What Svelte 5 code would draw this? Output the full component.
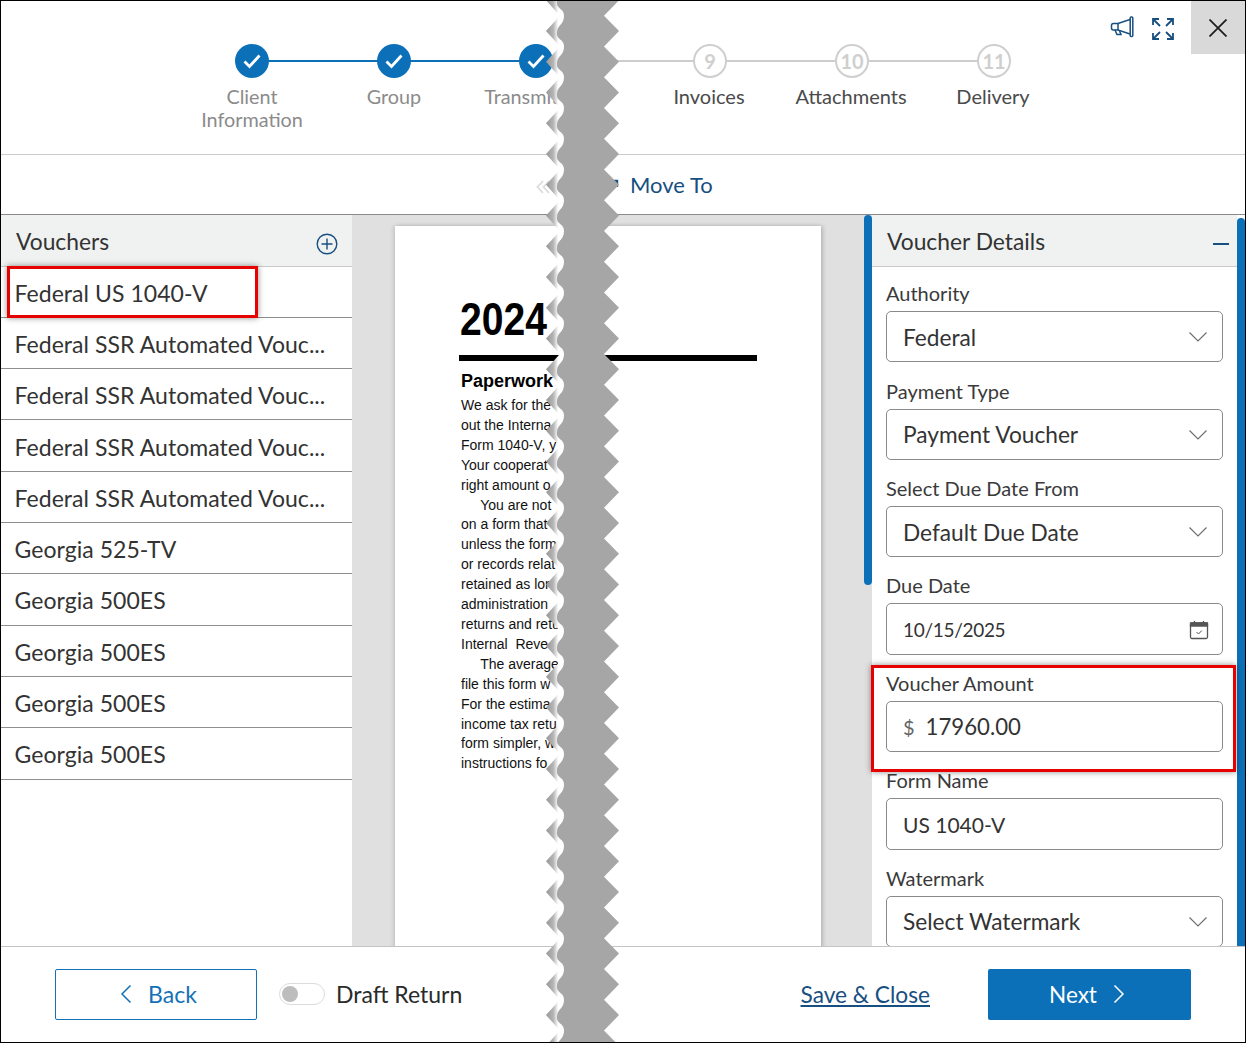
<script>
  const doneSteps = ['Client Information', 'Group', 'Transmittals'];
  const nextSteps = [
    { num: 9, label: 'Invoices' },
    { num: 10, label: 'Attachments' },
    { num: 11, label: 'Delivery' },
  ];

  const vouchers = [
    'Federal US 1040-V',
    'Federal SSR Automated Vouc...',
    'Federal SSR Automated Vouc...',
    'Federal SSR Automated Vouc...',
    'Federal SSR Automated Vouc...',
    'Georgia 525-TV',
    'Georgia 500ES',
    'Georgia 500ES',
    'Georgia 500ES',
    'Georgia 500ES',
  ];

  const fields = [
    { label: 'Authority', value: 'Federal', kind: 'select' },
    { label: 'Payment Type', value: 'Payment Voucher', kind: 'select' },
    { label: 'Select Due Date From', value: 'Default Due Date', kind: 'select' },
    { label: 'Due Date', value: '10/15/2025', kind: 'date' },
    { label: 'Voucher Amount', value: '17960.00', kind: 'money' },
    { label: 'Form Name', value: 'US 1040-V', kind: 'text' },
    { label: 'Watermark', value: 'Select Watermark', kind: 'select' },
  ];

  // only what shows left of the tear
  const noticeLines = [
    'We ask for the',
    'out the Interna',
    'Form 1040-V, y',
    'Your cooperat',
    'right amount o',
    '     You are not',
    'on a form that',
    'unless the form',
    'or records relat',
    'retained as lon',
    'administration',
    'returns and retu',
    'Internal  Reve',
    '     The average',
    'file this form w',
    'For the estima',
    'income tax retu',
    'form simpler, w',
    'instructions fo',
  ];

  // torn paper strip that hides the middle of the shot
  const PERIOD = 30.75;
  const HEIGHT = 1043;
  const count = Math.ceil(HEIGHT / PERIOD) + 1;
  const tips = Array.from({ length: count }, (_, i) => 0.3 + i * PERIOD);

  let tornRight = '';
  let tornLeft = '';
  tips.forEach((y) => {
    tornRight += ` L74 ${y} L59 ${y + PERIOD / 2}`;
  });
  [...tips].reverse().forEach((y) => {
    const p = PERIOD;
    tornLeft += ` L19 ${y + p / 2} C19 ${y + p * 0.25} 11 ${y + p * 0.3} 12 ${y + p * 0.05} C12 ${y - p * 0.2} 19 ${y - p * 0.2} 19 ${y - p / 2}`;
  });
  const tornBody = `M12 0${tornRight} L59 ${HEIGHT} L12 ${HEIGHT}${tornLeft} Z`;
  const tornTeeth = tips
    .map((y) => `M1 ${y} L14 ${y - PERIOD / 2 + 1} L19 ${y - PERIOD / 2 + 1} L19 ${y + PERIOD / 2 - 1} L14 ${y + PERIOD / 2 - 1} Z`)
    .join(' ');
</script>

<div class="window">
  <header class="top">
    <div class="stepper">
      {#each doneSteps as step, i}
        <div class="step done" class:first={i === 0}>
          <span class="dot">
            <svg width="18" height="18" viewBox="0 0 18 18"><path d="M1.5 9.5 L6.5 14.5 L16.5 3.5" fill="none" stroke="#fff" stroke-width="2.8" /></svg>
          </span>
          <span class="step-label">{step}</span>
        </div>
      {/each}
      <div class="step-gap"></div>
      {#each nextSteps as step, i}
        <div class="step todo" class:last={i === nextSteps.length - 1}>
          <span class="dot">{step.num}</span>
          <span class="step-label">{step.label}</span>
        </div>
      {/each}
    </div>
    <div class="actions">
      <button class="icon-btn megaphone" aria-label="Announcements">
        <svg width="24" height="22" viewBox="0 0 24 22" fill="none" stroke="#174f80" stroke-width="1.5">
          <rect x="20.2" y="1" width="2.6" height="19.5" rx="1" />
          <path d="M20 3.5 L8 7.5 H3.5 Q1.5 7.5 1.5 9.5 V12 Q1.5 14 3.5 14 H8 L20 18" />
          <path d="M8 7.5 V14" />
          <path d="M5 14 L7 18.5 H11 L9.5 15" />
        </svg>
      </button>
      <button class="icon-btn expand" aria-label="Expand">
        <svg width="24" height="24" viewBox="0 0 24 24" fill="none" stroke="#174f80" stroke-width="1.8">
          <path d="M2 8 V2 H8 M2 2 L9 9" />
          <path d="M16 2 H22 V8 M22 2 L15 9" />
          <path d="M2 16 V22 H8 M2 22 L9 15" />
          <path d="M16 22 H22 V16 M22 22 L15 15" />
        </svg>
      </button>
      <button class="close" aria-label="Close">
        <svg width="18" height="18" viewBox="0 0 18 18"><path d="M0.5 0.5 L17.5 17.5 M17.5 0.5 L0.5 17.5" stroke="#1c1c1c" stroke-width="1.7" /></svg>
      </button>
    </div>
  </header>

  <div class="toolbar">
    <svg class="rewind" width="14" height="14" viewBox="0 0 14 14" fill="none" stroke="#dcdcdc" stroke-width="1.8">
      <path d="M7 1 L1.5 7 L7 13 M13 1 L7.5 7 L13 13" />
    </svg>
    <svg class="move-icon" width="20" height="20" viewBox="0 0 20 20" fill="none" stroke="#174f80" stroke-width="2.4">
      <path d="M5 17 L15 7 M10 5 H16 V11" />
    </svg>
    <span class="move-label">Move To</span>
  </div>

  <main class="body">
    <aside class="vouchers">
      <div class="panel-head">
        <span>Vouchers</span>
        <svg class="plus" width="22" height="22" viewBox="0 0 22 22" fill="none" stroke="#174f80" stroke-width="1.4">
          <circle cx="11" cy="11" r="9.8" />
          <path d="M11 5.5 V16.5 M5.5 11 H16.5" />
        </svg>
      </div>
      {#each vouchers as voucher}
        <div class="voucher">{voucher}</div>
      {/each}
    </aside>

    <section class="preview">
      <div class="page">
        <div class="year">2024</div>
        <div class="rule"></div>
        <div class="notice">
          <div class="notice-title">Paperwork</div>
          {#each noticeLines as line}
            <div class="notice-line">{line}</div>
          {/each}
        </div>
      </div>
      <div class="thumb"></div>
    </section>

    <section class="details">
      <div class="panel-head">
        <span>Voucher Details</span>
        <span class="minus"></span>
      </div>
      <div class="fields">
        {#each fields as field}
          <div class="field">
            <div class="field-label">{field.label}</div>
            <div class="control {field.kind}">
              {#if field.kind === 'money'}<span class="currency">$</span>{/if}
              <span class="value">{field.value}</span>
              {#if field.kind === 'select'}
                <svg class="caret" width="18" height="10" viewBox="0 0 18 10" fill="none" stroke="#6f6f6f" stroke-width="1.2"><path d="M0.5 0.5 L9 9 L17.5 0.5" /></svg>
              {:else if field.kind === 'date'}
                <svg class="cal" width="20" height="20" viewBox="0 0 20 20" fill="none" stroke="#555" stroke-width="1.3">
                  <rect x="1.5" y="3" width="17" height="15.5" rx="1.5" />
                  <path d="M1.5 3 H18.5 V6 H1.5 Z" fill="#555" />
                  <path d="M5.5 1 V3 M14.5 1 V3" />
                  <path d="M7.5 12 L9.5 14 L12.8 10.5" stroke-width="1" />
                </svg>
              {/if}
            </div>
          </div>
        {/each}
      </div>
    </section>

    <div class="rail"></div>
  </main>

  <footer class="bottom">
    <button class="back">
      <svg width="12" height="20" viewBox="0 0 12 20" fill="none" stroke="#1371b8" stroke-width="1.5"><path d="M10.5 1.5 L2 10 L10.5 18.5" /></svg>
      Back
    </button>
    <span class="toggle"><span class="knob"></span></span>
    <span class="draft">Draft Return</span>
    <span class="save">Save &amp; Close</span>
    <button class="next">
      Next
      <svg width="12" height="20" viewBox="0 0 12 20" fill="none" stroke="#fff" stroke-width="1.5"><path d="M1.5 1.5 L10 10 L1.5 18.5" /></svg>
    </button>
  </footer>

  <div class="callout callout-voucher"></div>
  <div class="callout callout-amount"></div>

  <svg class="torn" width="76" height="1043" viewBox="0 0 76 1043" aria-hidden="true">
    <defs>
      <linearGradient id="tooth" x1="0" x2="1" y1="0" y2="0">
        <stop offset="0" stop-color="#979797" />
        <stop offset="0.4" stop-color="#b4b4b4" />
        <stop offset="0.68" stop-color="#ffffff" />
        <stop offset="1" stop-color="#ffffff" />
      </linearGradient>
    </defs>
    <path d={tornTeeth} fill="url(#tooth)" />
    <path d={tornBody} fill="#a6a6a6" />
  </svg>
</div>

<style>
  :global(body) {
    margin: 0;
    background: #fff;
  }

  .window {
    position: relative;
    box-sizing: border-box;
    width: 1246px;
    height: 1043px;
    border: 1px solid #000;
    background: #fff;
    overflow: hidden;
    font-family: Lato, "Open Sans", sans-serif;
    color: #333;
    display: flex;
    flex-direction: column;
  }

  button {
    font-family: inherit;
    cursor: pointer;
    background: none;
    border: 0;
    padding: 0;
  }

  /* stepper */
  .top {
    box-sizing: border-box;
    height: 154px;
    flex: none;
    display: flex;
    border-bottom: 1px solid #ccc;
  }

  .stepper {
    display: flex;
    padding: 43px 0 0 180px;
  }

  .step {
    position: relative;
    width: 142px;
    display: flex;
    flex-direction: column;
    align-items: center;
    text-align: center;
  }

  .step::before {
    content: '';
    position: absolute;
    top: 16px;
    left: 0;
    right: 0;
    height: 2px;
    background: #0b70b8;
  }

  .step.first::before {
    left: 50%;
  }

  .step.todo::before {
    background: #cdcdcd;
  }

  .step.last::before {
    right: 50%;
  }

  .step-gap {
    width: 32px;
    height: 2px;
    margin-top: 16px;
    background: #cdcdcd;
  }

  .dot {
    position: relative;
    box-sizing: border-box;
    width: 34px;
    height: 34px;
    border-radius: 50%;
    display: flex;
    align-items: center;
    justify-content: center;
    background: #0b70b8;
  }

  .todo .dot {
    background: #fff;
    border: 2px solid #cfcfcf;
    color: #cfcfcf;
    font-size: 20px;
    font-weight: 700;
  }

  .step-label {
    width: 120px;
    margin-top: 7px;
    font-size: 19.8px;
    line-height: 23px;
    color: #8b8b8b;
  }

  .todo .step-label {
    color: #4a4a4a;
    width: 142px;
    padding-right: 2px;
    box-sizing: border-box;
    font-size: 20px;
  }

  .actions {
    margin-left: auto;
    display: flex;
    align-items: flex-start;
  }

  .icon-btn {
    display: block;
    margin-top: 16px;
  }

  .megaphone {
    margin-top: 15px;
    margin-right: 17px;
  }

  .expand {
    margin-right: 16px;
  }

  .close {
    width: 54px;
    height: 53px;
    background: #d9d9d9;
    display: flex;
    align-items: center;
    justify-content: center;
  }

  /* move-to row */
  .toolbar {
    box-sizing: border-box;
    height: 60px;
    flex: none;
    display: flex;
    align-items: center;
    padding-left: 535px;
    border-bottom: 1px solid #8a8a8a;
  }

  .rewind {
    margin-right: 51px;
    margin-top: 4px;
  }

  .move-icon {
    margin-top: 2px;
    flex: none;
  }

  .move-label {
    margin-left: 9px;
    font-size: 22px;
    color: #174f80;
  }

  /* three columns */
  .body {
    flex: 1;
    min-height: 0;
    display: flex;
  }

  .vouchers {
    width: 351px;
    flex: none;
  }

  .panel-head {
    box-sizing: border-box;
    height: 52px;
    display: flex;
    align-items: center;
    justify-content: space-between;
    padding: 0 15px;
    background: #f0f2f2;
    border-bottom: 1px solid #c9c9c9;
    font-size: 22.8px;
    color: #333;
  }

  .plus {
    margin-top: 6px;
    margin-right: -1px;
  }

  .voucher {
    box-sizing: border-box;
    height: 51.33px;
    padding: 2px 0 0 13.5px;
    display: flex;
    align-items: center;
    border-bottom: 1px solid #8f8f8f;
    font-size: 23px;
    letter-spacing: 0.05px;
    color: #333;
  }

  .panel-head + .voucher {
    height: 50.7px;
  }

  .preview {
    position: relative;
    width: 520px;
    flex: none;
    box-sizing: border-box;
    padding: 11px 0 0 43px;
    background: #e0e0e0;
    overflow: hidden;
  }

  .page {
    box-sizing: border-box;
    width: 426px;
    height: 760px;
    padding: 73px 0 0 64px;
    background: #fff;
    box-shadow: 2px 0 4px rgba(0, 0, 0, 0.18), -2px 0 4px rgba(0, 0, 0, 0.1);
    font-family: "Liberation Sans", Arial, sans-serif;
    color: #111;
  }

  .year {
    margin-left: 1px;
    font-size: 46px;
    line-height: 40px;
    font-weight: 700;
    color: #000;
    transform: scaleX(0.85);
    transform-origin: left center;
  }

  .rule {
    width: 298px;
    height: 5.5px;
    margin-top: 16px;
    background: #000;
  }

  .notice {
    margin-left: 2px;
  }

  .notice-title {
    margin-top: 9.5px;
    font-size: 18px;
    line-height: 22px;
    font-weight: 700;
    color: #000;
  }

  .notice-line {
    font-size: 14px;
    line-height: 19.9px;
    white-space: pre;
  }

  .notice-title + .notice-line {
    margin-top: 4px;
  }

  .thumb {
    position: absolute;
    top: 0;
    right: 0;
    width: 8px;
    height: 370px;
    border-radius: 4px;
    background: #0b70b8;
  }

  .details {
    width: 365px;
    flex: none;
    overflow: hidden;
  }

  .details .panel-head {
    padding-right: 8px;
  }

  .minus {
    width: 16px;
    height: 2px;
    margin-top: 6px;
    background: #174f80;
  }

  .fields {
    padding: 16.25px 14px 0;
  }

  .field {
    height: 97.4px;
  }

  .field-label {
    height: 28px;
    font-size: 20px;
    line-height: 21px;
    color: #3a3a3a;
  }

  .control {
    box-sizing: border-box;
    height: 51px;
    display: flex;
    align-items: center;
    padding: 1px 15px 0 16px;
    border: 1px solid #8a8a8a;
    border-radius: 5px;
    background: #fff;
    font-size: 22.7px;
    color: #333;
  }

  .control.date,
  .control.text {
    height: 52px;
  }

  .control.date {
    padding-right: 13px;
    font-size: 19px;
    letter-spacing: -0.3px;
  }

  .control.text {
    font-size: 21px;
  }

  .control.money {
    font-size: 22.2px;
  }

  .value {
    flex: 1;
  }

  .currency {
    margin-right: 11px;
    font-size: 20px;
    color: #666;
  }

  .rail {
    width: 8px;
    flex: none;
    margin-top: 3px;
    border-radius: 4px 4px 0 0;
    background: #0b70b8;
  }

  /* footer */
  .bottom {
    flex: none;
    box-sizing: border-box;
    height: 96px;
    display: flex;
    align-items: flex-start;
    padding: 22px 54px 0;
    border-top: 1px solid #c4c4c4;
    background: #fff;
    position: relative;
  }

  .back,
  .next {
    height: 51px;
    width: 202px;
    display: flex;
    align-items: center;
    justify-content: center;
    border-radius: 2px;
    font-size: 23px;
  }

  .back {
    box-sizing: border-box;
    gap: 16px;
    padding: 0 0 1px 5px;
    border: 1px solid #1371b8;
    color: #1371b8;
  }

  .toggle {
    box-sizing: border-box;
    width: 46px;
    height: 22px;
    margin: 14px 0 0 22px;
    padding: 2px;
    border: 1px solid #dcdcdc;
    border-radius: 11px;
  }

  .knob {
    display: block;
    width: 16px;
    height: 16px;
    border-radius: 50%;
    background: #bdbdbd;
  }

  .draft {
    margin: 11px 0 0 11px;
    font-size: 23px;
    color: #2a2a2a;
  }

  .save {
    margin: 12px 58px 0 auto;
    font-size: 22.7px;
    color: #174f80;
    text-decoration: underline;
  }

  .next {
    box-sizing: border-box;
    gap: 16px;
    width: 203px;
    padding: 0 5px 1px 0;
    background: #0b70b8;
    color: #fff;
    font-size: 22.5px;
  }

  /* review annotations drawn over the shot */
  .callout {
    position: absolute;
    box-sizing: border-box;
    border: 3px solid #e60000;
    box-shadow: 0 0 6px rgba(0, 0, 0, 0.45);
  }

  .callout-voucher {
    top: 265px;
    left: 6px;
    width: 251px;
    height: 52px;
  }

  .callout-amount {
    top: 664px;
    left: 870px;
    width: 365px;
    height: 107px;
  }

  .torn {
    position: absolute;
    top: -1px;
    left: 544px;
  }
</style>
